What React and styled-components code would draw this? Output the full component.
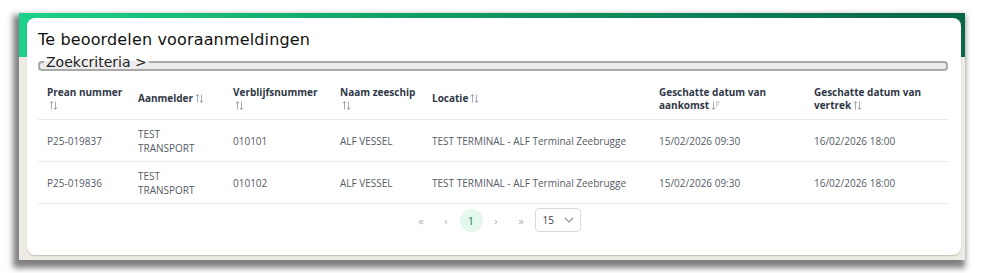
import React from 'react';
import styled, { createGlobalStyle } from 'styled-components';

const Global = createGlobalStyle`
    body {
        margin: 0;
        background: #fff;
        font-family: "Open Sans", "DejaVu Sans", sans-serif;
    }
`;

const Page = styled.div`
    padding: 13px 20px 14px 19px;
`;

const Frame = styled.div`
    width: 946px;
    height: 247px;
    box-sizing: border-box;
    padding: 5px 4px 5px 8px;
    background:
        linear-gradient(90deg, #1dd18c 0%, #0f9a63 45%, #0a6746 100%) top / 100% 44px no-repeat,
        #eeebe4;
    box-shadow: -3px 5px 6px 3px rgba(0, 0, 0, 0.5);
`;

const Card = styled.div`
    height: 100%;
    box-sizing: border-box;
    background: #fff;
    border-radius: 8px;
    box-shadow: 0 1px 1px rgba(120, 110, 90, 0.35);
    padding: 10px 11px 0 11px;
`;

const Title = styled.h1`
    margin: 0;
    font-family: "DejaVu Sans", sans-serif;
    font-weight: 400;
    font-size: 16px;
    letter-spacing: 0.15px;
    color: #111;
    line-height: 24px;
`;

const Criteria = styled.fieldset`
    margin: 3px 0 0 0;
    padding: 0;
    height: 11px;
    box-sizing: border-box;
    border: 2px solid #a8a8a8;
    border-radius: 4px;
    background: #ececec;
    width: 910px;
`;

const Legend = styled.legend`
    padding: 0 2px;
    margin-left: 4px;
    font-family: "DejaVu Sans", sans-serif;
    font-size: 14px;
    line-height: 14px;
    color: #222;
`;

const Table = styled.table`
    border-collapse: collapse;
    width: 910px;
    margin-top: 7px;
    table-layout: fixed;
    font-family: "Open Sans", sans-serif;
`;

const Th = styled.th`
    text-align: left;
    font-size: 10px;
    font-weight: 700;
    color: #2f3746;
    padding: 0 6px 0 9px;
    height: 41px;
    line-height: 13px;
    border-bottom: 1px solid #e8ebef;
    vertical-align: middle;
`;

const NoWrap = styled.span`
    white-space: nowrap;
`;

const Td = styled.td`
    font-size: 10px;
    color: #555b66;
    padding: 0 ${p => (p.$narrow ? '40px' : '9px')} 0 9px;
    height: 41px;
    line-height: 14px;
    border-bottom: 1px solid #e8ebef;
`;

const Pager = styled.div`
    display: flex;
    justify-content: center;
    align-items: center;
    gap: 2px;
    margin-top: 4px;
    margin-left: 2px;
    font-family: "Open Sans", sans-serif;
`;

const PageBtn = styled.span`
    width: 23px;
    height: 23px;
    border-radius: 50%;
    display: flex;
    align-items: center;
    justify-content: center;
    font-size: 11px;
    color: ${p => (p.$active ? '#2f7a57' : '#a8b0bb')};
    background: ${p => (p.$active ? '#e4f8ee' : 'transparent')};
`;

const Select = styled.div`
    width: 46px;
    height: 24px;
    border: 1px solid #d6dbe2;
    border-radius: 4px;
    display: flex;
    align-items: center;
    justify-content: space-between;
    padding: 0 6px 0 7px;
    box-sizing: border-box;
    font-size: 10px;
    color: #444;
`;

const SortIcon = ({ desc }) => (
    <svg width="9" height="9" viewBox="0 0 9 9" style={{ verticalAlign: '-1px', marginLeft: 2 }}>
        {desc ? (
            <g stroke="#9aa2ad" strokeWidth="0.9" fill="none">
                <path d="M2.5 0.5v8M0.8 6.8l1.7 1.7 1.7-1.7" />
                <path d="M5 1h3.5M5 3h2.5M5 5h1.5" />
            </g>
        ) : (
            <g stroke="#9aa2ad" strokeWidth="0.9" fill="none">
                <path d="M2.5 8.5v-8M0.8 2.2l1.7-1.7 1.7 1.7" />
                <path d="M6.5 0.5v8M4.8 6.8l1.7 1.7 1.7-1.7" />
            </g>
        )}
    </svg>
);

const Chevron = () => (
    <svg width="10" height="6" viewBox="0 0 10 6">
        <path d="M1 1l4 4 4-4" stroke="#8a93a0" strokeWidth="1.2" fill="none" />
    </svg>
);

const columns = [
    { w: 91, label: 'Prean nummer', br: true },
    { w: 95, label: 'Aanmelder' },
    { w: 107, label: 'Verblijfsnummer', br: true },
    { w: 92, label: 'Naam zeeschip', br: true },
    { w: 227, label: 'Locatie' },
    { w: 155, label: 'Geschatte datum van aankomst', desc: true },
    { w: 143, label: 'Geschatte datum van vertrek' },
];

const rows = [
    ['P25-019837', 'TEST TRANSPORT', '010101', 'ALF VESSEL', 'TEST TERMINAL - ALF Terminal Zeebrugge', '15/02/2026 09:30', '16/02/2026 18:00'],
    ['P25-019836', 'TEST TRANSPORT', '010102', 'ALF VESSEL', 'TEST TERMINAL - ALF Terminal Zeebrugge', '15/02/2026 09:30', '16/02/2026 18:00'],
];

const App = () => (
    <Page>
        <Global />
        <Frame>
            <Card>
                <Title>Te beoordelen vooraanmeldingen</Title>
                <Criteria>
                    <Legend>Zoekcriteria &gt;</Legend>
                </Criteria>
                <Table>
                    <colgroup>
                        {columns.map(c => <col key={c.label} style={{ width: c.w }} />)}
                    </colgroup>
                    <thead>
                        <tr>
                            {columns.map(c => (
                                <Th key={c.label}>
                                    {c.br ? <NoWrap>{c.label}</NoWrap> : c.label}
                                    {c.br && <br />}
                                    <SortIcon desc={c.desc} />
                                </Th>
                            ))}
                        </tr>
                    </thead>
                    <tbody>
                        {rows.map(r => (
                            <tr key={r[0]}>
                                {r.map((v, i) => (
                                    <Td key={i} $narrow={i === 1}>{v}</Td>
                                ))}
                            </tr>
                        ))}
                    </tbody>
                </Table>
                <Pager>
                    <PageBtn>«</PageBtn>
                    <PageBtn>‹</PageBtn>
                    <PageBtn $active>1</PageBtn>
                    <PageBtn>›</PageBtn>
                    <PageBtn>»</PageBtn>
                    <Select>
                        15
                        <Chevron />
                    </Select>
                </Pager>
            </Card>
        </Frame>
    </Page>
);

export default App;
